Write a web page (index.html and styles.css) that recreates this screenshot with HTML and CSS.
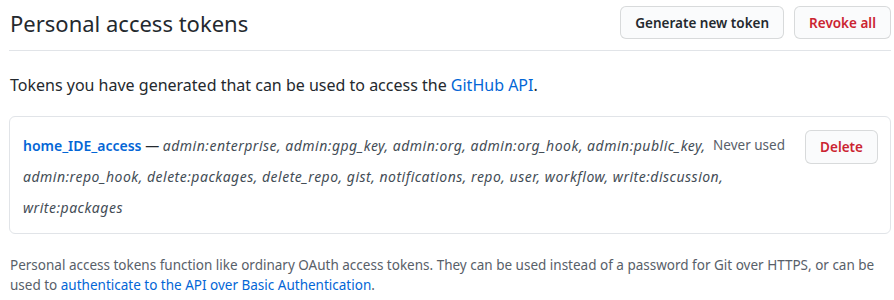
FILE: index.html
```html
<!DOCTYPE html>
<html lang="en">
<head>
  <meta charset="UTF-8" />
  <title>Personal access tokens</title>
  <link rel="stylesheet" href="styles.css">
</head>
<body>
  <div class="page">
    <div class="subhead">
      <h2 class="subhead-title">Personal access tokens</h2>
      <div class="subhead-actions">
        <button class="btn">Generate new token</button>
        <button class="btn btn-danger">Revoke all</button>
      </div>
    </div>

    <p class="intro">Tokens you have generated that can be used to access the <a href="#">GitHub API</a>.</p>

    <div class="token-box">
      <div class="token-row">
        <div class="token-info">
          <span class="last-used">Never used</span>
          <a href="#" class="token-name">home_IDE_access</a> — <em class="scopes">admin:enterprise, admin:gpg_key, admin:org, admin:org_hook, admin:public_key, admin:repo_hook, delete:packages, delete_repo, gist, notifications, repo, user, workflow, write:discussion, write:packages</em>
        </div>
        <button class="btn btn-danger btn-sm">Delete</button>
      </div>
    </div>

    <p class="note">Personal access tokens function like ordinary OAuth access tokens. They can be used instead of a password for Git over HTTPS, or can be used to <a href="#">authenticate to the API over Basic Authentication</a>.</p>
  </div>
</body>
</html>
```

FILE: styles.css
```css
body {
  margin: 0;
  font-family: "Noto Sans", "Open Sans", sans-serif;
  color: #24292e;
  background: #fff;
}
a {
  color: #0366d6;
  text-decoration: none;
}
.page {
  margin: 0 3px 0 9px;
}
.subhead {
  display: flex;
  justify-content: space-between;
  align-items: center;
  padding: 6px 0 11px;
  border-bottom: 1px solid #e1e4e8;
}
.subhead-title {
  margin: 0 0 0 1px;
  font-size: 22px;
  font-weight: normal;
  line-height: 32px;
}
.subhead-actions {
  display: flex;
  gap: 10px;
}
.btn {
  font-family: inherit;
  font-size: 13.5px;
  font-weight: 600;
  color: #24292e;
  background: #fafbfc;
  border: 1px solid rgba(27, 31, 35, 0.15);
  border-radius: 6px;
  height: 33px;
  padding: 0 14px;
  cursor: pointer;
}
.btn-danger {
  color: #cb2431;
}
.intro {
  margin: 22px 0 0 1px;
  font-size: 16px;
  line-height: 24px;
}
.token-box {
  margin-top: 19px;
  border: 1px solid #e1e4e8;
  border-radius: 6px;
  padding: 13px 12px 10px 13px;
}
.token-row {
  display: flex;
  justify-content: space-between;
  align-items: flex-start;
}
.token-info {
  width: 762px;
  font-size: 14px;
  line-height: 31px;
  color: #24292e;
}
.token-name {
  font-weight: 600;
}
.scopes {
  color: #444d56;
  letter-spacing: 0.5px;
}
.last-used {
  float: right;
  font-size: 13.5px;
  color: #586069;
}
.btn-sm {
  height: 34px;
  padding: 0 14px;
}
.note {
  margin: 21px 0 0 1px;
  font-size: 13.5px;
  line-height: 20px;
  color: #586069;
}
```
